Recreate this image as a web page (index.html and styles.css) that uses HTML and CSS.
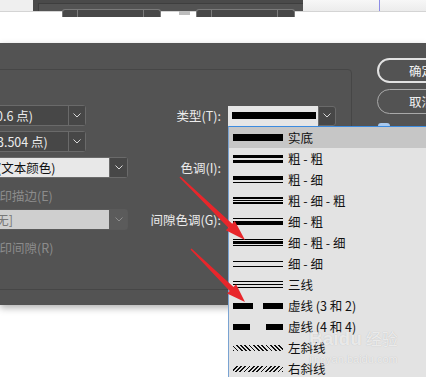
FILE: index.html
```html
<!DOCTYPE html>
<html lang="zh-CN">
<head>
    <meta charset="UTF-8">
    <title>描边样式</title>
    <link rel="stylesheet" href="styles.css">
</head>
<body>

    <div class="topbar">
        <div class="tb-left"></div>
        <div class="tb-app">
            <div class="tb-inner">
                <div class="tb-field"><span class="tb-seg s1"></span><span class="tb-seg s2"></span><span class="tb-seg s3"></span></div>
                <div class="tb-icon"></div>
                <div class="tb-field"><span class="tb-seg s1"></span><span class="tb-seg s2"></span><span class="tb-seg s3"></span></div>
            </div>
        </div>
        <div class="tb-right"><div class="tb-guide"></div></div>
    </div>

    <div class="spacer"></div>

    <div class="dialog">
        <div class="group">
            <div class="row r1">
                <div class="combo dark w-small">
                    <span class="combo-text pad-4">0.6 点)</span>
                    <span class="combo-arrow"><svg width="8" height="5" viewBox="0 0 8 5"><polyline points="0.5,0.5 4,4 7.5,0.5" fill="none" stroke="#d8d8d8" stroke-width="1"/></svg></span>
                </div>
                <div class="label">类型(T):</div>
                <div class="type-field">
                    <div class="type-main"><div class="type-bar"></div></div>
                    <span class="combo-arrow type-arrow"><svg width="8" height="5" viewBox="0 0 8 5"><polyline points="0.5,0.5 4,4 7.5,0.5" fill="none" stroke="#d8d8d8" stroke-width="1"/></svg></span>
                </div>
            </div>

            <div class="row r2">
                <div class="combo dark w-small">
                    <span class="combo-text pad-5">3.504 点)</span>
                    <span class="combo-arrow"><svg width="8" height="5" viewBox="0 0 8 5"><polyline points="0.5,0.5 4,4 7.5,0.5" fill="none" stroke="#d8d8d8" stroke-width="1"/></svg></span>
                </div>
            </div>

            <div class="row r3">
                <div class="combo light w-wide">
                    <span class="combo-text pad-5">(文本颜色)</span>
                    <span class="combo-arrow"><svg width="8" height="5" viewBox="0 0 8 5"><polyline points="0.5,0.5 4,4 7.5,0.5" fill="none" stroke="#d8d8d8" stroke-width="1"/></svg></span>
                </div>
                <div class="label">色调(I):</div>
            </div>

            <div class="row check">
                <div class="check-text">叠印描边(E)</div>
            </div>

            <div class="row r4">
                <div class="combo light disabled w-wide">
                    <span class="combo-text pad-0">[无]</span>
                    <span class="combo-arrow"><svg width="8" height="5" viewBox="0 0 8 5"><polyline points="0.5,0.5 4,4 7.5,0.5" fill="none" stroke="#8e8e8e" stroke-width="1"/></svg></span>
                </div>
                <div class="label">间隙色调(G):</div>
            </div>

            <div class="row check">
                <div class="check-text">叠印间隙(R)</div>
            </div>
        </div>

        <div class="buttons">
            <button class="btn primary">确定</button>
            <button class="btn">取消</button>
            <div class="peek"></div>
        </div>
    </div>

    <div class="list">
        <div class="item selected">
            <div class="sample"><i class="ln" style="height: 7px;"></i></div>
            <span class="name">实底</span>
        </div>
        <div class="item">
            <div class="sample g2"><i class="ln" style="height: 3px;"></i><i class="ln" style="height: 3px;"></i></div>
            <span class="name">粗 - 粗</span>
        </div>
        <div class="item">
            <div class="sample g2"><i class="ln" style="height: 4px;"></i><i class="ln" style="height: 1px;"></i></div>
            <span class="name">粗 - 细</span>
        </div>
        <div class="item">
            <div class="sample g1"><i class="ln" style="height: 2px;"></i><i class="ln" style="height: 1px;"></i><i class="ln" style="height: 2px;"></i></div>
            <span class="name">粗 - 细 - 粗</span>
        </div>
        <div class="item">
            <div class="sample g2"><i class="ln" style="height: 1px;"></i><i class="ln" style="height: 4px;"></i></div>
            <span class="name">细 - 粗</span>
        </div>
        <div class="item">
            <div class="sample g1"><i class="ln" style="height: 1px;"></i><i class="ln" style="height: 3px;"></i><i class="ln" style="height: 1px;"></i></div>
            <span class="name">细 - 粗 - 细</span>
        </div>
        <div class="item">
            <div class="sample g4"><i class="ln" style="height: 1px;"></i><i class="ln" style="height: 1px;"></i></div>
            <span class="name">细 - 细</span>
        </div>
        <div class="item">
            <div class="sample g2"><i class="ln" style="height: 1px;"></i><i class="ln" style="height: 1px;"></i><i class="ln" style="height: 1px;"></i></div>
            <span class="name">三线</span>
        </div>
        <div class="item">
            <div class="sample dashes"><i class="dash d3"></i><i class="dash d3"></i></div>
            <span class="name">虚线 (3 和 2)</span>
        </div>
        <div class="item">
            <div class="sample dashes"><i class="dash d4"></i><i class="dash d4"></i></div>
            <span class="name">虚线 (4 和 4)</span>
        </div>
        <div class="item">
            <div class="sample"><i class="hatch left"></i></div>
            <span class="name">左斜线</span>
        </div>
        <div class="item">
            <div class="sample"><i class="hatch right"></i></div>
            <span class="name">右斜线</span>
        </div>
    </div>

    <div class="watermark">
        <div class="wm-logo">Baidu<span class="wm-cn">经验</span></div>
        <div class="wm-url">jingyan.baidu.com</div>
    </div>

    <!-- red annotation arrows -->
    <svg class="arrows" width="426" height="377" viewBox="0 0 426 377">
        <polygon fill="#e8262b" points="179.5,177.5 228.4,227.7 225.8,230.3 245,240 234.8,221.1 232.2,223.7 180.5,176.5"/>
        <polygon fill="#e8262b" points="190.5,249.5 229.7,290.9 227.1,293.5 245,302 236.1,284.3 233.5,286.9 191.5,248.5"/>
    </svg>

</body>
</html>
```

FILE: styles.css
```css
* {
    box-sizing: border-box;
}

body {
    margin: 0;
    width: 426px;
    height: 377px;
    overflow: hidden;
    position: relative;
    background: #fff;
    font-family: "Noto Sans CJK SC", "Noto Sans", sans-serif;
    font-size: 12.5px;
}

/* strip of the document window above the dialog */
.topbar {
    display: flex;
    height: 12px;
    border-bottom: 1px solid #d4d4d4;
}

.tb-left {
    width: 33px;
    background: #efefef;
}

.tb-app {
    width: 270px;
    background: #4a4a4a;
    padding: 3px 0 0 5px;
}

.tb-inner {
    height: 100%;
    background: #535353;
    border-top: 1px solid #3e3e3e;
    border-left: 1px solid #3e3e3e;
    display: flex;
    align-items: flex-start;
    padding: 5px 0 0 23px;
}

.tb-field {
    display: flex;
    height: 8px;
}

.tb-seg {
    height: 8px;
    border: 1px solid #7a7a7a;
    border-bottom: none;
    background: #484848;
}

.tb-seg.s1 { width: 16px; border-radius: 3px 0 0 0; }
.tb-seg.s2 { width: 66px; border-left: none; }
.tb-seg.s3 { width: 17px; border-left: none; border-radius: 0 3px 0 0; }

.tb-icon {
    width: 11px;
    height: 4px;
    margin: 2px 6px 0 18px;
    background: #bdbdbd;
}

.tb-right {
    flex: 1;
    background: linear-gradient(#f7f7f7, #ececec);
    padding-left: 76px;
}

.tb-guide {
    width: 1px;
    height: 100%;
    background: #8d8de6;
}

.spacer {
    height: 31px;
}

/* dialog */
.dialog {
    display: flex;
    height: 262px;
    background: #535353;
    box-shadow: 0 3px 7px rgba(0, 0, 0, 0.3);
    color: #e8e8e8;
    overflow: hidden;
}

.group {
    flex: 0 0 362px;
    height: 221px;
    margin: 26px 0 0 -10px;
    border: 1px solid #464646;
    border-radius: 4px;
    padding-top: 35px;
}

.row {
    display: grid;
    grid-template-columns: 159px 71px auto;
    align-items: center;
    height: 20px;
}

.row.r1 { height: 21px; }
.row.r2 { margin-top: 5px; }
.row.r3 { margin-top: 6px; }
.row.r4 { margin-top: 5px; }
.row.check { margin-top: 9px; height: 18px; }

.label {
    grid-column: 2;
    text-align: right;
    white-space: nowrap;
    color: #ececec;
}

.check-text {
    margin-left: -4px;
    color: #8c8c8c;
    white-space: nowrap;
}

.combo {
    display: flex;
    height: 100%;
    border: 1px solid #6a6a6a;
    border-radius: 3px;
}

.combo.w-small { width: 95px; }
.combo.w-wide { width: 137px; }

.combo-text {
    flex: 1;
    display: flex;
    align-items: center;
    white-space: nowrap;
    overflow: hidden;
}

.pad-0 { padding-left: 0; }
.pad-4 { padding-left: 4px; }
.pad-5 { padding-left: 5px; }

.combo-arrow {
    width: 17px;
    display: flex;
    align-items: center;
    justify-content: center;
    border-left: 1px solid #6a6a6a;
    background: #474747;
}

.combo.dark {
    background: #474747;
    color: #ececec;
}

.combo.light .combo-text {
    background: #e8e8e8;
    color: #111;
}

.combo.light .combo-arrow {
    width: 18px;
}

.combo.disabled {
    border-color: #5a5a5a;
}

.combo.disabled .combo-text {
    background: #cfcfcf;
    color: #777;
}

.combo.disabled .combo-arrow {
    background: #5b5b5b;
    border-left-color: #5b5b5b;
}

.type-field {
    grid-column: 3;
    display: flex;
    width: 108px;
    height: 20px;
    margin-left: 7px;
}

.type-main {
    flex: 1;
    display: flex;
    align-items: center;
    padding: 0 2px 0 4px;
    background: #e6e6e6;
}

.type-bar {
    flex: 1;
    height: 7px;
    background: #000;
}

.type-arrow {
    width: 18px;
    border: 1px solid #6a6a6a;
    border-radius: 0 3px 3px 0;
}

.buttons {
    display: flex;
    flex-direction: column;
    gap: 6px;
    margin-left: 25px;
    padding-top: 15px;
}

.btn {
    width: 90px;
    height: 25px;
    padding: 0 0 0 31px;
    text-align: left;
    background: transparent;
    color: #f2f2f2;
    font: inherit;
    border: 1px solid #a9a9a9;
    border-radius: 13px;
}

.btn.primary {
    border: 2px solid #e2e2e2;
    padding-left: 30px;
}

.peek {
    width: 12px;
    height: 12px;
    margin: 3px 0 0 1px;
    background: #a8c9ee;
    border-radius: 3px;
}

/* open dropdown of stroke types */
.list {
    position: absolute;
    left: 228px;
    top: 126px;
    width: 210px;
    height: 260px;
    background: #e3e3e3;
    border-top: 1px solid #3b8be0;
    border-left: 1px solid #7aa3d2;
}

.item {
    display: flex;
    align-items: center;
    height: 21px;
}

.item.selected {
    background: #c6c6c6;
}

.sample {
    width: 50px;
    margin-left: 4px;
    display: flex;
    flex-direction: column;
}

.sample.g1 { gap: 1px; }
.sample.g2 { gap: 2px; }
.sample.g4 { gap: 4px; }

.ln {
    display: block;
    background: #000;
}

.sample.dashes {
    flex-direction: row;
    justify-content: space-between;
}

.dash {
    display: block;
    height: 6px;
    background: #000;
}

.dash.d3 { width: 20px; }
.dash.d4 { width: 17px; }

.hatch {
    display: block;
    height: 6px;
}

.hatch.left {
    background: repeating-linear-gradient(45deg, #111 0 1.2px, transparent 1.2px 3px);
}

.hatch.right {
    background: repeating-linear-gradient(-45deg, #111 0 1.2px, transparent 1.2px 3px);
}

.name {
    margin-left: 5px;
    color: #111;
    white-space: nowrap;
}

.watermark {
    position: absolute;
    left: 309px;
    top: 327px;
    color: rgba(255, 255, 255, 0.7);
    text-shadow: 0 0 1px rgba(0, 0, 0, 0.2);
    pointer-events: none;
}

.wm-logo {
    font-family: "Liberation Sans", sans-serif;
    font-size: 19px;
    font-weight: bold;
    line-height: 22px;
}

.wm-cn {
    font-family: "Noto Sans CJK SC", sans-serif;
    font-size: 16px;
    font-weight: normal;
    margin-left: 4px;
}

.wm-url {
    font-family: "Liberation Sans", sans-serif;
    font-size: 11px;
    margin-top: 3px;
}

.arrows {
    position: absolute;
    left: 0;
    top: 0;
    pointer-events: none;
}
```
